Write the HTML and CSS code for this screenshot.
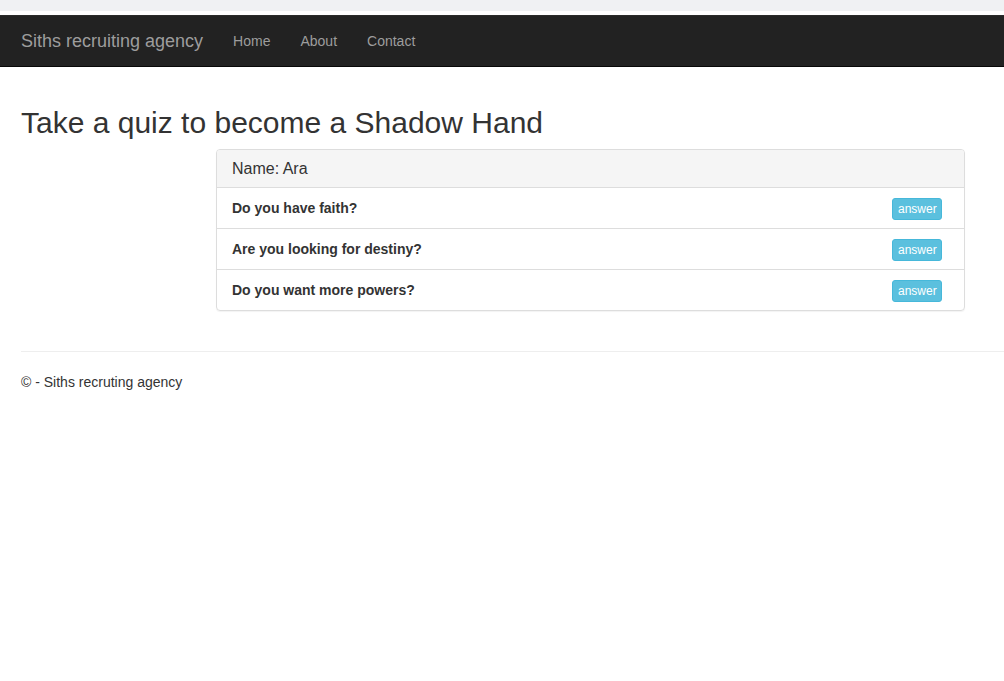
FILE: index.html
```html
<!DOCTYPE html>
<html>
<head>
<meta charset="utf-8">
<title>Siths recruiting agency</title>
<link rel="stylesheet" href="styles.css">
</head>
<body>
<div class="topstrip"></div>
<nav class="navbar">
  <a class="brand" href="#">Siths recruiting agency</a>
  <ul class="nav">
    <li><a href="#">Home</a></li>
    <li><a href="#">About</a></li>
    <li><a href="#">Contact</a></li>
  </ul>
</nav>
<main class="content">
  <h2 class="title">Take a quiz to become a Shadow Hand</h2>
  <div class="panel">
    <div class="panel-heading">Name: Ara</div>
    <ul class="list">
      <li class="item"><span class="q">Do you have faith?</span><button class="btn">answer</button></li>
      <li class="item"><span class="q">Are you looking for destiny?</span><button class="btn">answer</button></li>
      <li class="item"><span class="q">Do you want more powers?</span><button class="btn">answer</button></li>
    </ul>
  </div>
  <hr class="rule">
  <footer class="footer">© - Siths recruting agency</footer>
</main>
</body>
</html>
```
FILE: styles.css
```css
* { box-sizing: border-box; }
html, body { margin: 0; padding: 0; }
body {
  font-family: "Liberation Sans", Arial, sans-serif;
  font-size: 14px;
  line-height: 20px;
  color: #333;
  background: #fff;
  overflow: hidden;
}
.topstrip {
  height: 11px;
  background: #f0f1f3;
  margin-bottom: 4px;
}
.navbar {
  display: flex;
  align-items: center;
  height: 52px;
  background: #222;
  border-top: 1px solid #2a2a2a;
  border-bottom: 1px solid #080808;
  padding-left: 21px;
}
.brand {
  font-size: 18px;
  line-height: 20px;
  color: #9d9d9d;
  text-decoration: none;
  margin-right: 15px;
}
.nav {
  display: flex;
  list-style: none;
  margin: 0;
  padding: 0;
}
.nav a {
  display: block;
  padding: 15px;
  color: #9d9d9d;
  text-decoration: none;
  font-size: 14px;
  line-height: 20px;
}
.content {
  padding: 39px 0 0 21px;
}
.title {
  font-size: 30px;
  font-weight: 500;
  line-height: 33px;
  margin: 0 0 10px;
  color: #333;
}
.panel {
  margin-left: 195px;
  width: 749px;
  border: 1px solid #ddd;
  border-radius: 4px;
  box-shadow: 0 1px 1px rgba(0,0,0,0.05);
  margin-bottom: 40px;
  overflow: hidden;
}
.panel-heading {
  background: #f5f5f5;
  border-bottom: 1px solid #ddd;
  padding: 8px 15px;
  font-size: 16px;
  line-height: 20px;
  height: 38px;
  display: flex;
  align-items: center;
}
.list { list-style: none; margin: 0; padding: 0; }
.item {
  display: flex;
  align-items: center;
  justify-content: space-between;
  height: 41px;
  padding: 0 22px 0 15px;
  border-top: 1px solid #ddd;
  font-weight: bold;
}
.item:first-child { border-top: none; height: 40px; }
.btn {
  font-family: "Liberation Sans", Arial, sans-serif;
  font-size: 12px;
  line-height: 18px;
  padding: 1px 5px;
  color: #fff;
  background: #5bc0de;
  border: 1px solid #46b8da;
  border-radius: 3px;
  width: 50px;
  height: 22px;
  margin-top: 2px;
}
.rule {
  border: 0;
  border-top: 1px solid #eee;
  margin: 0 -40px 20px 0;
}
.footer {
  font-size: 14px;
  line-height: 20px;
}
```
